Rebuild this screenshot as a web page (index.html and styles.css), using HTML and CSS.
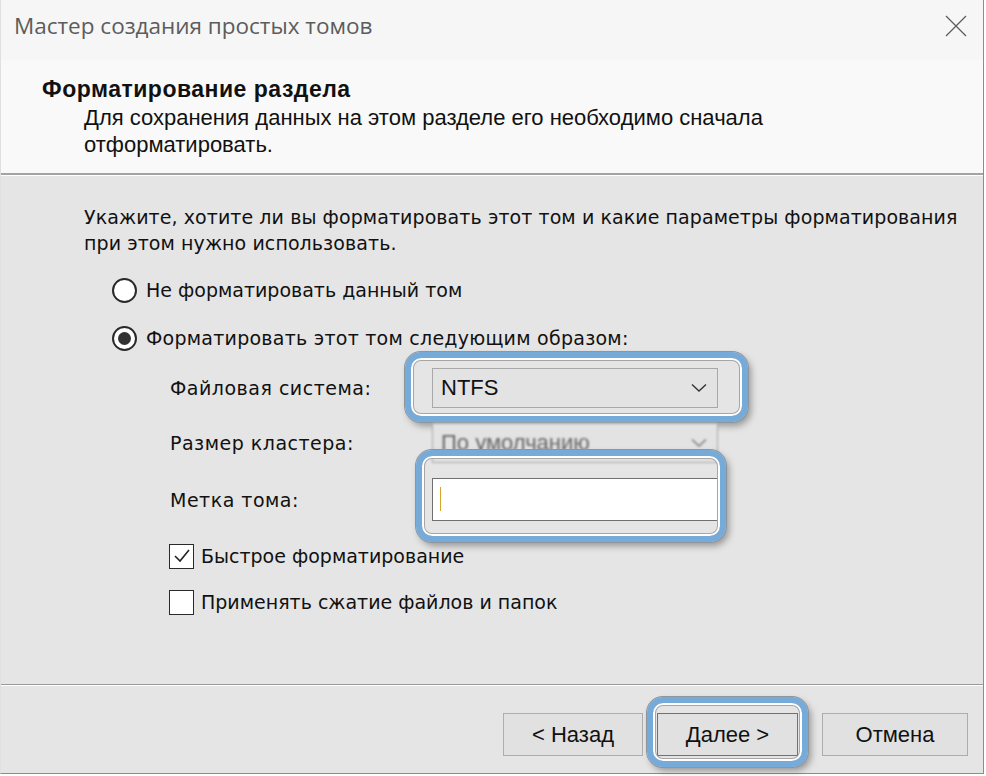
FILE: index.html
```html
<!DOCTYPE html>
<html lang="ru">
<head>
    <meta charset="UTF-8">
    <title>Мастер создания простых томов</title>
    <link rel="stylesheet" href="styles.css">
</head>
<body>
    <div class="window">
        <div class="titlebar">
            <span class="title">Мастер создания простых томов</span>
            <svg class="close" width="22" height="22" viewBox="0 0 22 22">
                <path d="M1 1 L21 21 M21 1 L1 21" stroke="#5a5a5a" stroke-width="1.2" fill="none"/>
            </svg>
        </div>

        <div class="header">
            <h1>Форматирование раздела</h1>
            <p>Для сохранения данных на этом разделе его необходимо сначала<br>отформатировать.</p>
        </div>

        <div class="content">
            <p class="intro">Укажите, хотите ли вы форматировать этот том и какие параметры форматирования<br>при этом нужно использовать.</p>

            <div class="radio"><span class="circle"></span>Не форматировать данный том</div>
            <div class="radio checked"><span class="circle"></span>Форматировать этот том следующим образом:</div>

            <div class="params">
                <span class="plabel">Файловая система:</span>
                <div class="field">
                    <div class="select">NTFS
                        <svg class="chev" width="16" height="10" viewBox="0 0 16 10"><path d="M1 1.5 L8 8 L15 1.5" stroke="#333" stroke-width="1.4" fill="none"/></svg>
                    </div>
                    <div class="ring ring-fs"></div>
                </div>

                <span class="plabel">Размер кластера:</span>
                <div class="field">
                    <div class="select dim">По умолчанию
                        <svg class="chev" width="16" height="10" viewBox="0 0 16 10"><path d="M1 1.5 L8 8 L15 1.5" stroke="#777" stroke-width="1.4" fill="none"/></svg>
                    </div>
                </div>

                <span class="plabel">Метка тома:</span>
                <div class="field">
                    <div class="textbox"><span class="caret"></span></div>
                    <div class="ring ring-label"></div>
                </div>
            </div>

            <div class="check checked">
                <span class="box"><svg width="20" height="20" viewBox="0 0 20 20"><path d="M3 10 L8 15 L17 4" stroke="#222" stroke-width="1.6" fill="none"/></svg></span>
                Быстрое форматирование
            </div>
            <div class="check"><span class="box"></span>Применять сжатие файлов и папок</div>
        </div>

        <div class="footer">
            <div class="btn btn-back">&lt; Назад</div>
            <div class="btn-wrap">
                <div class="btn btn-next">Далее &gt;</div>
                <div class="ring ring-next"></div>
            </div>
            <div class="btn btn-cancel">Отмена</div>
        </div>
    </div>
</body>
</html>
```

FILE: styles.css
```css
* {
    margin: 0;
    padding: 0;
    box-sizing: border-box;
}

body {
    width: 986px;
    height: 776px;
    background: #ffffff;
    font-family: "DejaVu Sans", sans-serif;
    color: #111;
}

.window {
    width: 984px;
    height: 774px;
    border-right: 1px solid #8c8c8c;
    border-bottom: 1px solid #8c8c8c;
    border-left: 1px solid #e0e0e0;
    display: flex;
    flex-direction: column;
    background: #e5e5e5;
}

.titlebar {
    height: 60px;
    background: #f6f6f6;
    display: flex;
    align-items: flex-start;
    justify-content: space-between;
    padding: 10px 16px 0 13px;
}

.title {
    font-family: "Open Sans", sans-serif;
    font-size: 22.5px;
    line-height: 32px;
    color: #5c5c5c;
}

.close {
    margin-top: 5px;
}

.header {
    height: 115px;
    background: #f9f9f9;
    border-bottom: 2px solid #a3a3a3;
    padding: 16px 0 0 41px;
}

.header h1 {
    font-family: "Liberation Sans", sans-serif;
    font-size: 23px;
    font-weight: bold;
    letter-spacing: 0.5px;
    line-height: 27px;
}

.header p {
    margin: 1px 0 0 42px;
    font-family: "Liberation Sans", sans-serif;
    font-size: 22px;
    line-height: 27px;
}

.content {
    flex: 1;
    border-top: 1px solid #ffffff;
    padding: 28px 0 0 83px;
    font-size: 19px;
}

.intro {
    line-height: 26px;
    letter-spacing: 0.08px;
}

.radio {
    display: flex;
    align-items: center;
    height: 30px;
    margin-left: 28px;
    margin-top: 19px;
}

.radio + .radio {
    margin-top: 18px;
}

.radio.checked {
    letter-spacing: 0.25px;
}

.circle {
    width: 25px;
    height: 25px;
    border: 2px solid #2a2a2a;
    border-radius: 50%;
    background: #fff;
    margin-right: 9px;
    display: flex;
    align-items: center;
    justify-content: center;
}

.radio.checked .circle::after {
    content: "";
    width: 13px;
    height: 13px;
    border-radius: 50%;
    background: #333;
}

.params {
    display: grid;
    grid-template-columns: 262px 286px;
    row-gap: 15px;
    align-items: center;
    margin: 15px 0 0 86px;
}

.plabel {
    letter-spacing: 0.5px;
}

.field {
    position: relative;
}

.select {
    height: 40px;
    border: 1px solid #a8a8a8;
    background: #e3e3e3;
    display: flex;
    align-items: center;
    justify-content: space-between;
    padding: 0 10px 0 8px;
    font-family: "Liberation Sans", sans-serif;
    font-size: 22px;
}

.select.dim {
    color: #666;
    filter: blur(1px);
}

.textbox {
    height: 43px;
    border: 1px solid #707070;
    background: #fff;
    padding: 8px 0 0 7px;
}

.caret {
    display: block;
    width: 1px;
    height: 24px;
    background: #d4a72c;
}

.ring {
    position: absolute;
    border: 6px solid #76aad9;
    border-radius: 16px;
    box-shadow: 0 0 0 1px #8e959c, inset 0 0 0 2px #ffffff, inset 0 0 0 3px #a6a6a6, 3px 4px 7px rgba(0, 0, 0, 0.35);
}

.ring-fs {
    left: -27px;
    right: -30px;
    top: -16px;
    bottom: -14px;
}

.ring-label {
    left: -16px;
    right: -8px;
    top: -28px;
    bottom: -21px;
}

.check {
    display: flex;
    align-items: center;
    height: 30px;
    margin: 20px 0 0 85px;
}

.check + .check {
    margin-top: 16px;
}

.box {
    width: 25px;
    height: 25px;
    border: 1.5px solid #2a2a2a;
    background: #fff;
    margin-right: 7px;
    display: flex;
    align-items: center;
    justify-content: center;
}

.footer {
    height: 89px;
    border-top: 1px solid #9a9a9a;
    box-shadow: inset 0 1px 0 #ffffff;
    display: flex;
    align-items: flex-start;
    padding: 28px 0 0 502px;
}

.btn {
    height: 43px;
    border: 1px solid #adadad;
    background: #e1e1e1;
    display: flex;
    align-items: center;
    justify-content: center;
    font-family: "Liberation Sans", sans-serif;
    font-size: 22px;
}

.btn-back {
    width: 140px;
}

.btn-wrap {
    position: relative;
    margin-left: 14px;
}

.btn-next {
    width: 141px;
    border-color: #3c7fb1;
}

.ring-next {
    left: -10px;
    right: -10px;
    top: -16px;
    bottom: -11px;
}

.btn-cancel {
    width: 146px;
    margin-left: 24px;
}
```
